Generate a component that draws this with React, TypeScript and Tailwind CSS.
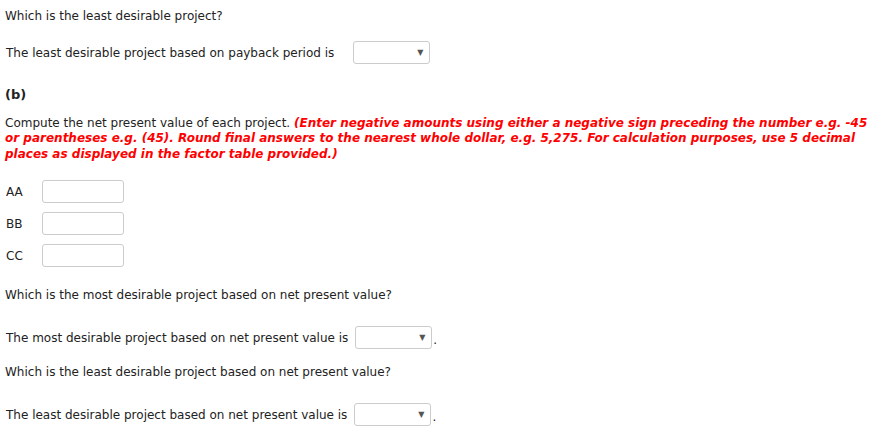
const PROJECTS = ["AA", "BB", "CC"] as const;

function Dropdown() {
  return (
    <span className="inline-flex items-center justify-end w-[77px] h-[23px] border border-[#cccccc] rounded-[3px] bg-white pr-[6px] align-middle">
      <span className="text-[8px] leading-none text-[#555]">▼</span>
    </span>
  );
}

export default function App() {
  return (
    <div className="w-[876px] h-[448px] bg-white text-[#222] font-['Verdana','DejaVu_Sans',sans-serif] text-[12px] px-[5px] pt-[9px]">
      <p className="leading-[15px]">Which is the least desirable project?</p>

      <div className="flex items-center mt-[17px] pl-[1px]">
        <span>The least desirable project based on payback period is</span>
        <span className="ml-[19px]">
          <Dropdown />
        </span>
      </div>

      <p className="font-bold text-[13px] mt-[21px]">(b)</p>

      <p className="mt-[11px] leading-[15.5px]">
        Compute the net present value of each project.{" "}
        <span className="text-[#ff0000] font-bold italic">
          (Enter negative amounts using either a negative sign preceding the number e.g. -45 or parentheses e.g. (45).
          Round final answers to the nearest whole dollar, e.g. 5,275. For calculation purposes, use 5 decimal places as
          displayed in the factor table provided.)
        </span>
      </p>

      <div className="mt-[18px] flex flex-col gap-[9px]">
        {PROJECTS.map((p) => (
          <div key={p} className="flex items-center">
            <span className="w-[37px] pl-[1px]">{p}</span>
            <input
              type="text"
              className="w-[82px] h-[23px] border border-[#cccccc] rounded-[3px] outline-none"
            />
          </div>
        ))}
      </div>

      <p className="mt-[19px]">Which is the most desirable project based on net present value?</p>

      <div className="flex items-center mt-[22px] pl-[1px]">
        <span>The most desirable project based on net present value is</span>
        <span className="ml-[7px]">
          <Dropdown />
        </span>
        <span className="ml-[1px] self-end">.</span>
      </div>

      <p className="mt-[14px]">Which is the least desirable project based on net present value?</p>

      <div className="flex items-center mt-[22px] pl-[1px]">
        <span>The least desirable project based on net present value is</span>
        <span className="ml-[7px]">
          <Dropdown />
        </span>
        <span className="ml-[1px] self-end">.</span>
      </div>
    </div>
  );
}
